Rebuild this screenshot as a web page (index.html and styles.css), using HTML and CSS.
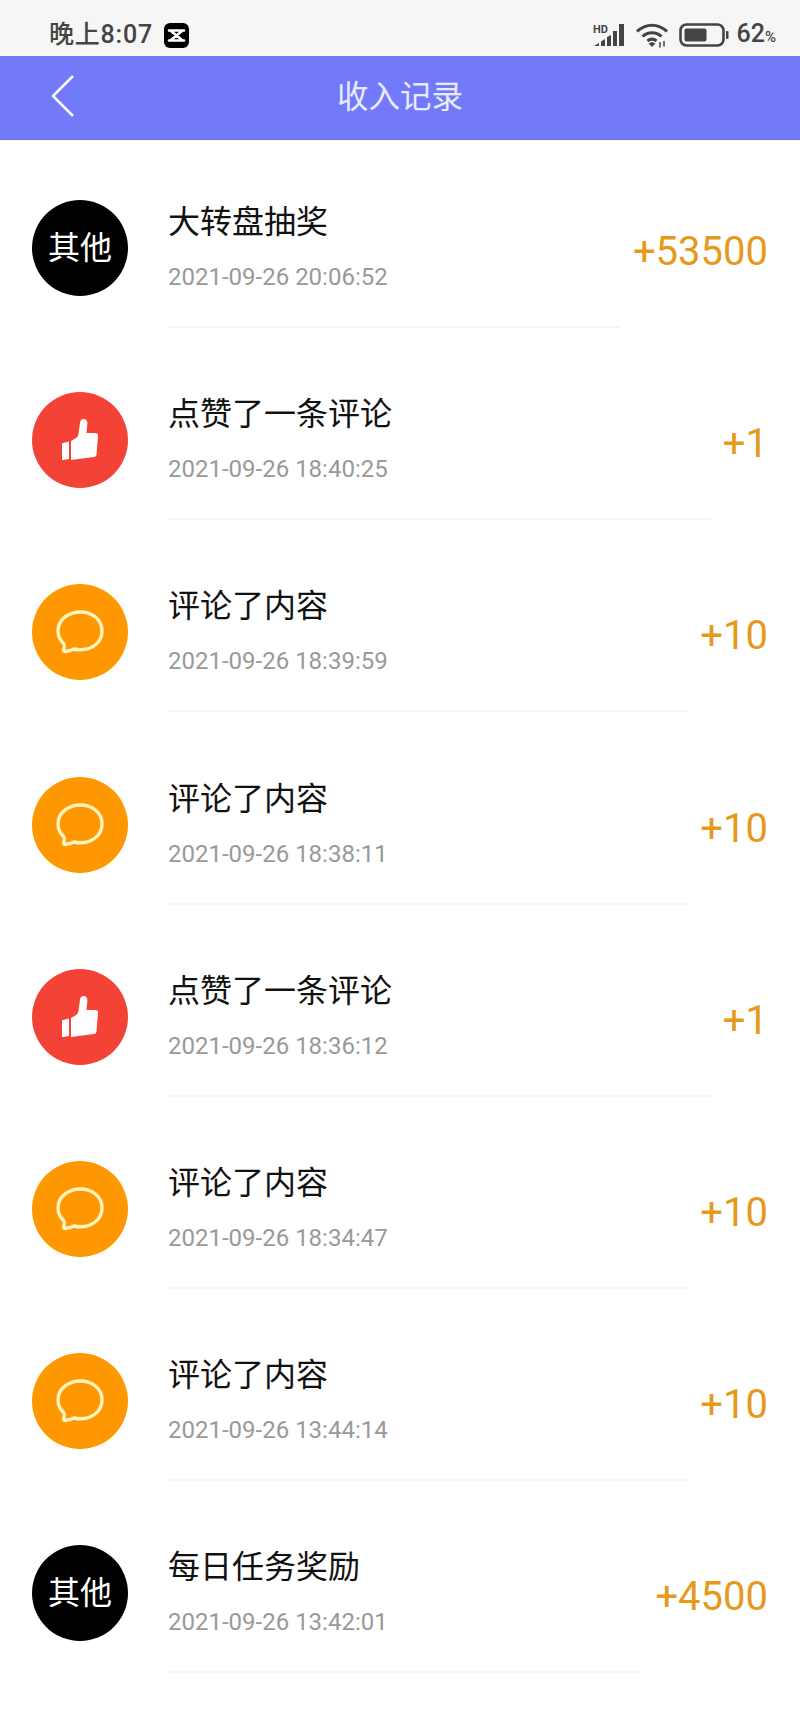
FILE: index.html
```html
<!DOCTYPE html>
<html lang="zh-CN">
<head>
  <meta charset="UTF-8">
  <meta name="viewport" content="width=device-width, initial-scale=1.0">
  <title>收入记录</title>
  <link rel="stylesheet" href="styles.css">
</head>
<body>
  <div class="status-bar">
    <div class="status-left">
      <span class="time">晚上8:07</span>
      <svg class="capcut" viewBox="0 0 25 25">
        <rect width="25" height="25" rx="6" fill="#000"/>
        <path d="M5 7.500h15M5 17.500h15M7 8l11 9M18 8L7 17" fill="none" stroke="#fff" stroke-width="2.600" stroke-linecap="round"/>
      </svg>
    </div>
    <div class="status-right">
      <svg class="signal" viewBox="0 0 32 24">
        <text x="0" y="10" class="hd">HD</text>
        <path d="M1 23l5-3v3zM8 18.500l4-2.500v7H8zM14 14l4-2v11h-4zM20 8h4v15h-4zM26 1h5v22h-5z" fill="#444"/>
      </svg>
      <svg class="wifi" viewBox="0 0 34 26">
        <path d="M2 9.500C11 1 23 1 32 9.500M7.500 14.500C13 9.500 21 9.500 26.500 14.500M12.500 19c3-2.500 6-2.500 9 0" fill="none" stroke="#444" stroke-width="3"/>
        <path d="M13.500 21.500l3.500-1.500 3.500 1.500-3.500 3.500z" fill="#444"/>
        <path d="M25 20v5.500M29 19v5.500" stroke="#444" stroke-width="1.500"/>
      </svg>
      <svg class="battery" viewBox="0 0 50 24">
        <rect x="1.500" y="1.500" width="43" height="21" rx="6" fill="none" stroke="#444" stroke-width="2.600"/>
        <rect x="5.500" y="5.500" width="22" height="13" rx="2" fill="#444"/>
        <rect x="47" y="8" width="2.500" height="8" rx="1" fill="#444"/>
      </svg>
      <span class="percent">62<small>%</small></span>
    </div>
  </div>

  <div class="nav-bar">
    <svg class="back" viewBox="0 0 26 44">
      <path d="M23 2L3 22l20 20" fill="none" stroke="#fff" stroke-width="2.500"/>
    </svg>
    <span class="nav-title">收入记录</span>
  </div>

  <div class="list">
    <div class="row">
      <div class="avatar other">其他</div>
      <div class="info">
        <div class="name">大转盘抽奖</div>
        <div class="date">2021-09-26 20:06:52</div>
      </div>
      <div class="amount">+53500</div>
    </div>
    <div class="row">
      <div class="avatar like"><svg class="thumb" viewBox="0 0 36 42"><use href="#thumb-shape"/></svg></div>
      <div class="info">
        <div class="name">点赞了一条评论</div>
        <div class="date">2021-09-26 18:40:25</div>
      </div>
      <div class="amount">+1</div>
    </div>
    <div class="row">
      <div class="avatar comment"><svg class="bubble" viewBox="0 0 48 44"><use href="#bubble-shape"/></svg></div>
      <div class="info">
        <div class="name">评论了内容</div>
        <div class="date">2021-09-26 18:39:59</div>
      </div>
      <div class="amount">+10</div>
    </div>
    <div class="row">
      <div class="avatar comment"><svg class="bubble" viewBox="0 0 48 44"><use href="#bubble-shape"/></svg></div>
      <div class="info">
        <div class="name">评论了内容</div>
        <div class="date">2021-09-26 18:38:11</div>
      </div>
      <div class="amount">+10</div>
    </div>
    <div class="row">
      <div class="avatar like"><svg class="thumb" viewBox="0 0 36 42"><use href="#thumb-shape"/></svg></div>
      <div class="info">
        <div class="name">点赞了一条评论</div>
        <div class="date">2021-09-26 18:36:12</div>
      </div>
      <div class="amount">+1</div>
    </div>
    <div class="row">
      <div class="avatar comment"><svg class="bubble" viewBox="0 0 48 44"><use href="#bubble-shape"/></svg></div>
      <div class="info">
        <div class="name">评论了内容</div>
        <div class="date">2021-09-26 18:34:47</div>
      </div>
      <div class="amount">+10</div>
    </div>
    <div class="row">
      <div class="avatar comment"><svg class="bubble" viewBox="0 0 48 44"><use href="#bubble-shape"/></svg></div>
      <div class="info">
        <div class="name">评论了内容</div>
        <div class="date">2021-09-26 13:44:14</div>
      </div>
      <div class="amount">+10</div>
    </div>
    <div class="row">
      <div class="avatar other">其他</div>
      <div class="info">
        <div class="name">每日任务奖励</div>
        <div class="date">2021-09-26 13:42:01</div>
      </div>
      <div class="amount">+4500</div>
    </div>
  </div>

  <svg class="defs" width="0" height="0">
    <defs>
      <g id="thumb-shape">
        <path d="M1 24l6-1.500V40L1 41c-.6 0-1-.4-1-1V25c0-.5.4-1 1-1z" fill="#fff"/>
        <path d="M9 22l5-3c1.500-1 2.300-2.500 2.500-4.500L18 4c.3-2.500 1.500-4 3.500-4 2.800 0 4 2 3.800 5L24.500 14H33c2.200 0 3.200 1.200 3 3l-1.500 18.500c-.2 1.500-1 2.300-2.500 2.500L9 41z" fill="#fff"/>
      </g>
      <path id="bubble-shape" d="M24.500 2C12.500 2 2 9.500 2 21c0 5.500 2.500 9.800 6 13 .6 1.500.5 3.500-.2 5-.7 1.500 0 2.700 1.700 2.500 3.500-.3 6-1.200 8.500-2.500 2.200.6 4.500.8 6.500.8C36.500 39.800 46 32 46 21 46 9.500 36.500 2 24.500 2z" fill="none" stroke="#fff3c0" stroke-width="3.400"/>
    </defs>
  </svg>
</body>
</html>
```

FILE: styles.css
```css
* {
  box-sizing: border-box;
}
html, body {
  margin: 0;
  padding: 0;
}
body {
  width: 800px;
  height: 1733px;
  overflow: hidden;
  background-color: #fff;
  font-family: Roboto, "Noto Sans CJK SC", sans-serif;
}
.status-bar {
  height: 56px;
  padding: 22px 24px 0 49px;
  display: flex;
  justify-content: space-between;
  align-items: flex-start;
  background-color: #f6f6f6;
  color: #444;
}
.status-left, .status-right {
  display: flex;
  align-items: center;
  height: 26px;
}
.time {
  font-size: 25px;
  line-height: 26px;
  font-weight: 500;
  letter-spacing: 0.8px;
}
.capcut {
  width: 25px;
  height: 25px;
  margin-left: 11px;
}
.signal {
  width: 32px;
  height: 24px;
}
.hd {
  font-family: Roboto, sans-serif;
  font-size: 11px;
  font-weight: 700;
  fill: #444;
}
.wifi {
  width: 34px;
  height: 26px;
  margin-left: 10px;
}
.battery {
  width: 50px;
  height: 24px;
  margin-left: 10px;
}
.percent {
  margin-left: 8px;
  font-size: 25px;
  line-height: 26px;
  font-weight: 500;
}
.percent small {
  font-size: 15px;
}
.nav-bar {
  height: 84px;
  position: relative;
  display: flex;
  align-items: center;
  justify-content: center;
  padding-bottom: 8px;
  background-color: #727af9;
  box-shadow: inset 0 -1px 0 #6a70e0;
}
.back {
  position: absolute;
  left: 50px;
  top: 18px;
  width: 26px;
  height: 44px;
}
.nav-title {
  font-size: 31.500px;
  color: #e8eafe;
}
.row {
  height: 192.2px;
  padding: 0 32px;
  display: flex;
  align-items: flex-start;
}
.avatar {
  width: 96px;
  height: 96px;
  margin-top: 60px;
  padding-bottom: 6px;
  flex-shrink: 0;
  border-radius: 50%;
  display: flex;
  align-items: center;
  justify-content: center;
  color: #fff;
  font-size: 32px;
}
.like, .comment {
  padding-bottom: 0;
}
.other {
  background-color: #000;
}
.like {
  background-color: #f44336;
}
.comment {
  background-color: #ff9800;
}
.thumb {
  width: 36px;
  height: 42px;
}
.bubble {
  width: 48px;
  height: 44px;
}
.info {
  flex: 1;
  height: 188px;
  margin-left: 40px;
  padding-top: 60px;
  border-bottom: 2px solid #f6f6f6;
}
.name {
  font-size: 32px;
  line-height: 44px;
  color: #111;
}
.date {
  margin-top: 17px;
  font-size: 24px;
  line-height: 32px;
  color: #999;
}
.amount {
  margin-left: 12px;
  margin-top: 90px;
  font-size: 40px;
  line-height: 44px;
  color: #e59a1c;
}
.defs {
  position: absolute;
}
```
